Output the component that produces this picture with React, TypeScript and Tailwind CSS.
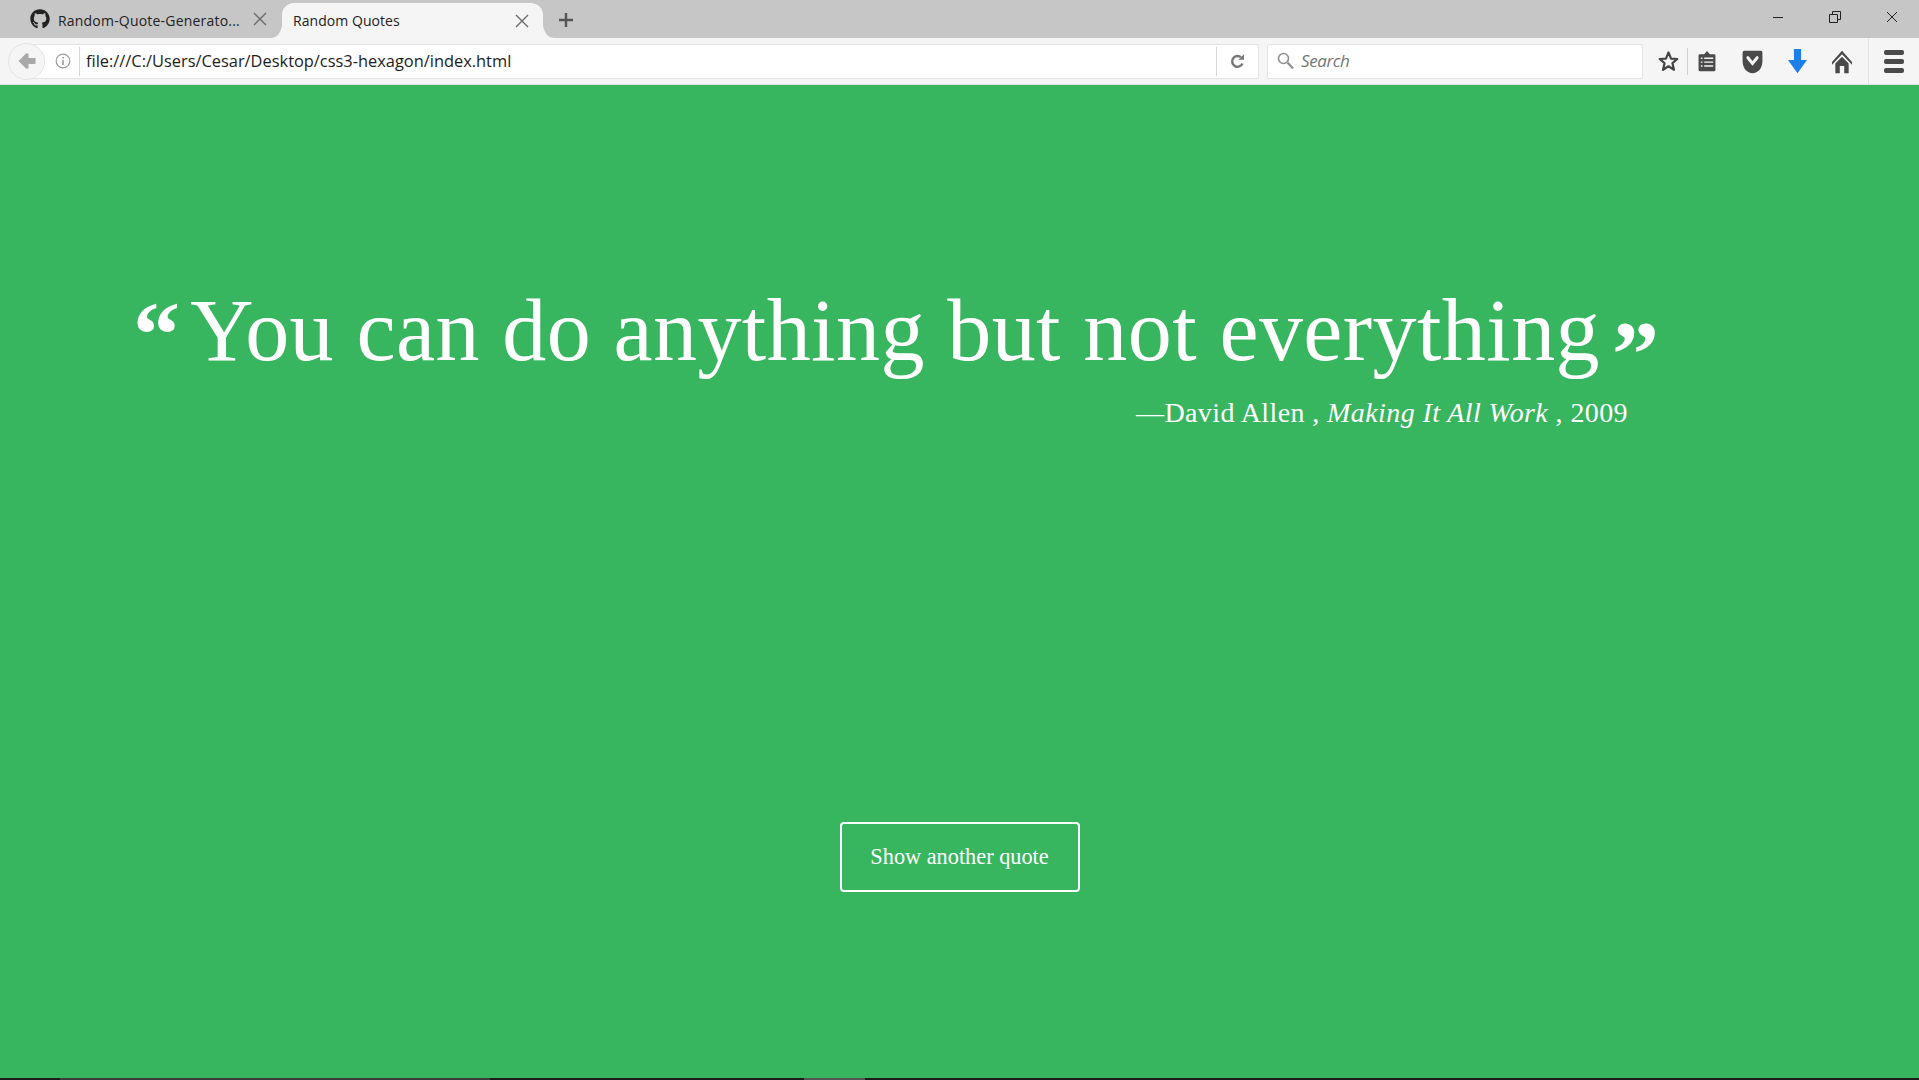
import { FaGithub } from "react-icons/fa";

function TabClose() {
  return (
    <svg width="14" height="14" viewBox="0 0 14 14" className="shrink-0 stroke-[#6b6b6b]">
      <path d="M1 1 L13 13 M13 1 L1 13" strokeWidth="1.4" fill="none" />
    </svg>
  );
}

function TabBar() {
  return (
    <div className="flex h-[38px] bg-[#c6c6c6] font-['Open_Sans',sans-serif] text-[14px] text-[#222]">
      {/* inactive tab */}
      <div className="ml-[30px] flex h-[38px] w-[252px] items-center">
        <FaGithub className="size-[20px] text-[#222]" />
        <span className="ml-[8px] mt-[2px] w-[195px] whitespace-nowrap tracking-[0.2px]">Random-Quote-Generato...</span>
        <TabClose />
      </div>

      {/* active tab */}
      <div className="relative mt-[3px] flex h-[35px] w-[261px] items-center rounded-t-[12px] bg-[#f5f5f5] pl-[11px] pr-[14px]">
        <svg width="12" height="12" viewBox="0 0 12 12" className="absolute bottom-0 left-[-12px]">
          <path d="M12 0 V12 H0 C7 12 10 8 12 0 Z" fill="#f5f5f5" />
        </svg>
        <svg width="12" height="12" viewBox="0 0 12 12" className="absolute bottom-0 right-[-12px]">
          <path d="M0 0 V12 H12 C5 12 2 8 0 0 Z" fill="#f5f5f5" />
        </svg>
        <span className="flex-1 tracking-[0.05px]">Random Quotes</span>
        <TabClose />
      </div>

      {/* new tab */}
      <svg width="16" height="16" viewBox="0 0 16 16" className="ml-[15px] mt-[12px]">
        <path d="M8 1 V15 M1 8 H15" stroke="#555" strokeWidth="2.4" fill="none" />
      </svg>

      {/* window controls */}
      <div className="ml-auto flex h-[34px] items-center pr-[21px]">
        <svg width="12" height="12" viewBox="0 0 12 12">
          <path d="M1 6.5 H11" stroke="#222" strokeWidth="1" fill="none" />
        </svg>
        <svg width="12" height="12" viewBox="0 0 12 12" className="ml-[45px]">
          <path d="M0.5 3.5 H8.5 V11.5 H0.5 Z M3.5 3.5 V0.5 H11.5 V8.5 H8.5" stroke="#222" strokeWidth="1" fill="none" />
        </svg>
        <svg width="12" height="12" viewBox="0 0 12 12" className="ml-[45px]">
          <path d="M1 1 L11 11 M11 1 L1 11" stroke="#222" strokeWidth="1" fill="none" />
        </svg>
      </div>
    </div>
  );
}

function ToolBar() {
  return (
    <div className="flex h-[47px] items-center border-b border-[#e2e2e2] bg-[#f5f5f5]">
      {/* back button + url bar */}
      <div className="relative ml-[20px] flex h-[35px] w-[1239px] items-center rounded-r-[2px] border border-[#e4e4e4] bg-white">
        <div className="absolute left-[-13px] top-[-2px] flex size-[37px] items-center justify-center rounded-full border border-[#e4e4e4] bg-[#f5f5f5]">
          <svg width="18" height="16" viewBox="0 0 18 16">
            <path d="M8 0.5 L0.5 8 L8 15.5 L10.5 15.5 L10.5 11 L17.5 11 L17.5 5 L10.5 5 L10.5 0.5 Z" fill="#a8a8a8" />
          </svg>
        </div>
        <svg width="16" height="16" viewBox="0 0 16 16" className="ml-[34px]">
          <circle cx="8" cy="8" r="6.8" stroke="#9a9a9a" strokeWidth="1.2" fill="none" />
          <path d="M8 7 V12 M8 4 V5.6" stroke="#9a9a9a" strokeWidth="1.6" fill="none" />
        </svg>
        <div className="ml-[8px] h-[29px] w-px bg-[#d8d8d8]" />
        <span className="ml-[6px] flex-1 font-['Open_Sans',sans-serif] text-[16.4px] text-[#1c1c1c]">
          file:///C:/Users/Cesar/Desktop/css3-hexagon/index.html
        </span>
        <div className="h-[29px] w-px bg-[#d8d8d8]" />
        <div className="flex w-[41px] justify-center">
          <svg width="15" height="16" viewBox="0 0 15 16">
            <path d="M12.5 10.5 A5.4 5.4 0 1 1 11 4.2" stroke="#777" strokeWidth="2.4" fill="none" />
            <path d="M8.5 6.8 H14 V1.2 Z" fill="#777" />
          </svg>
        </div>
      </div>

      {/* search */}
      <div className="ml-[8px] flex h-[35px] w-[376px] items-center rounded-[2px] border border-[#e4e4e4] bg-white pl-[9px]">
        <svg width="17" height="18" viewBox="0 0 17 18">
          <circle cx="6.5" cy="6.5" r="5" stroke="#8f8f8f" strokeWidth="1.6" fill="none" />
          <path d="M10.5 10.5 L16 16.5" stroke="#8f8f8f" strokeWidth="2.2" fill="none" />
        </svg>
        <span className="ml-[7px] font-['Open_Sans',sans-serif] text-[17px] italic tracking-[-0.4px] text-[#757575]">Search</span>
      </div>

      {/* star */}
      <svg width="21" height="22" viewBox="0 0 18 20" className="ml-[15px]">
        <path d="M9 2.2 L11.3 7.8 L17 8.2 L12.6 12 L14 18 L9 14.8 L4 18 L5.4 12 L1 8.2 L6.7 7.8 Z" stroke="#444" strokeWidth="2" strokeLinejoin="round" fill="none" />
      </svg>
      <div className="ml-[8px] h-[27px] w-px bg-[#cfcfcf]" />

      {/* reading list */}
      <svg width="18" height="24" viewBox="0 0 16 20" className="ml-[10px]">
        <path d="M1.5 4 H5.5 L8 1 L10.5 4 H14.5 Q15.5 4 15.5 5 V18 Q15.5 19 14.5 19 H1.5 Q0.5 19 0.5 18 V5 Q0.5 4 1.5 4 Z" fill="#4a4a4a" />
        <path d="M2.5 7.5 H4 M2.5 11 H4 M2.5 14.5 H4 M5.5 7.5 H13.5 M5.5 11 H13.5 M5.5 14.5 H13.5" stroke="#f5f5f5" strokeWidth="1.3" fill="none" />
      </svg>

      {/* pocket */}
      <svg width="21" height="24" viewBox="0 0 18 17" preserveAspectRatio="none" className="ml-[26px] mt-[2px]">
        <path d="M2 0.5 H16 Q17.5 0.5 17.5 2 V8 C17.5 13 13.5 16.5 9 16.5 C4.5 16.5 0.5 13 0.5 8 V2 Q0.5 0.5 2 0.5 Z" fill="#4a4a4a" />
        <path d="M5 5.5 L9 9.5 L13 5.5" stroke="#f5f5f5" strokeWidth="2.4" strokeLinecap="round" fill="none" />
      </svg>

      {/* download */}
      <svg width="19" height="25" viewBox="0 0 16 18" preserveAspectRatio="none" className="ml-[25px]">
        <path d="M5 0 H11 V8 H16 L8 17.5 L0 8 H5 Z" fill="#1c7fe6" />
      </svg>

      {/* home */}
      <svg width="20" height="24" viewBox="0 0 18 18" preserveAspectRatio="none" className="ml-[25px] mt-[2px]">
        <path d="M9 0.5 L18 9 V11 L9 3.2 L0 11 V9 Z" fill="#4a4a4a" />
        <path d="M9 5 L15 10.2 V17.5 H11 V12 H7 V17.5 H3 V10.2 Z" fill="#4a4a4a" />
      </svg>

      <div className="ml-[16px] h-[47px] w-px bg-[#e2e2e2]" />

      {/* menu */}
      <div className="ml-[15px] flex w-[20px] flex-col gap-[4px]">
        <div className="h-[5px] rounded-[2px] bg-[#4a4a4a]" />
        <div className="h-[5px] rounded-[2px] bg-[#4a4a4a]" />
        <div className="h-[5px] rounded-[2px] bg-[#4a4a4a]" />
      </div>
    </div>
  );
}

export default function App() {
  return (
    <div className="flex h-[1080px] w-[1919px] flex-col overflow-hidden bg-[#37b55f]">
      <TabBar />
      <ToolBar />

      <main className="flex flex-1 flex-col font-['Liberation_Serif',serif] text-white">
        <div className="mt-[201px] flex items-start pl-[133px]">
          <span className="mt-[10px] w-[57px] text-[94px] font-bold leading-[76px]">“</span>
          <h1 className="whitespace-nowrap text-[88px] font-normal leading-[90px] tracking-[0.42px]">
            You can do anything but not everything
          </h1>
          <span className="ml-[12px] mt-[29px] text-[94px] font-bold leading-[76px]">”</span>
        </div>

        <p className="mt-[4px] pr-[291px] text-right text-[28px] leading-[36px] tracking-[0.4px]">
          —David Allen , <em>Making It All Work</em> , 2009
        </p>

        <button className="mx-auto mt-[391px] h-[70px] w-[240px] rounded-[4px] border-2 border-white text-[22.3px]">
          Show another quote
        </button>

        {/* stray window strip at the very bottom */}
        <div className="mt-auto flex h-[2px] bg-[#1c1c1c]">
          <div className="ml-[60px] w-[430px] bg-[#3c3c3c]" />
          <div className="ml-[314px] w-[61px] bg-[#555]" />
        </div>
      </main>
    </div>
  );
}
